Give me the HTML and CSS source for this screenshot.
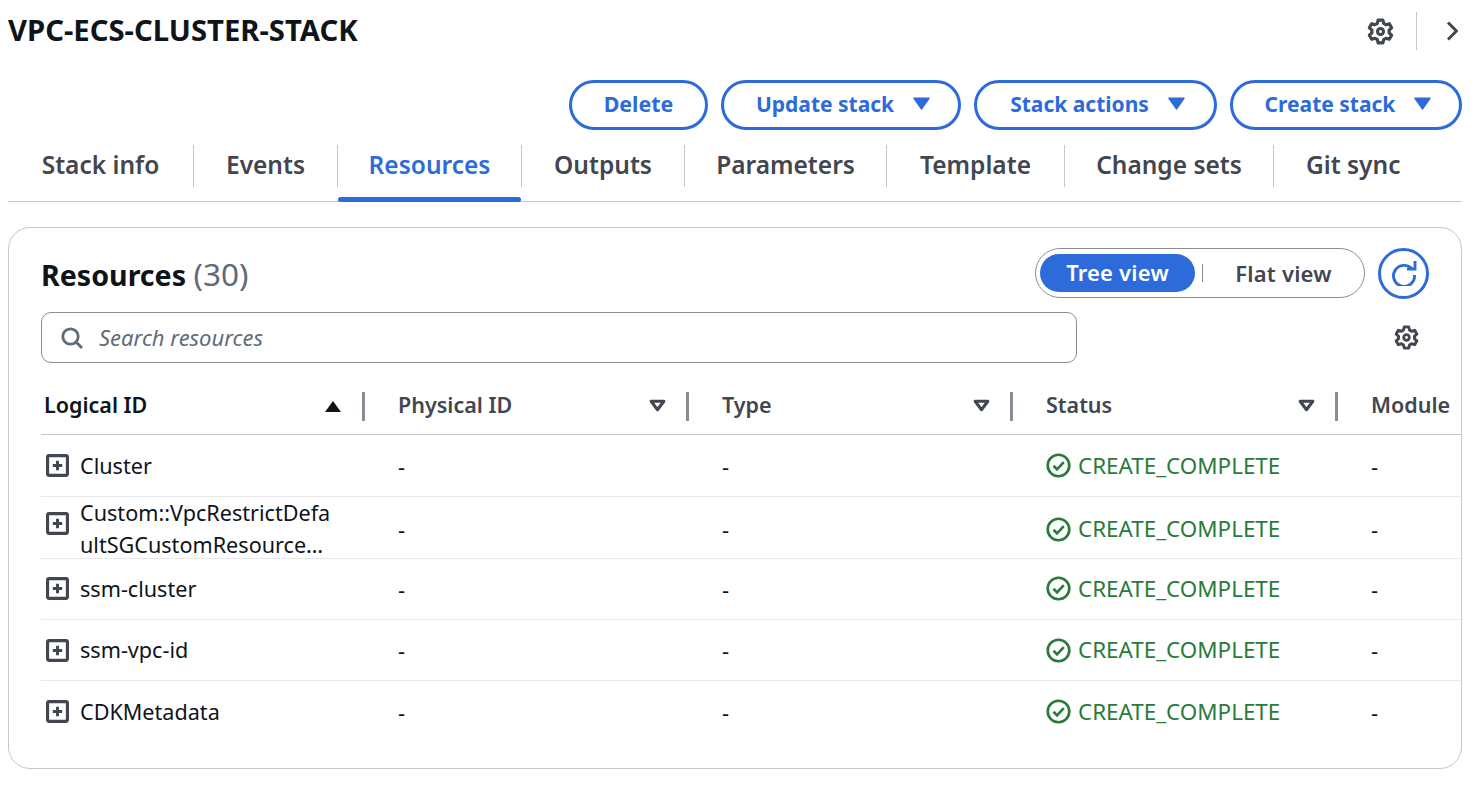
FILE: index.html
```html
<!doctype html>
<html lang="en">
<head>
<title>VPC-ECS-CLUSTER-STACK</title>
<meta charset="UTF-8">
<link rel="stylesheet" href="styles.css">
</head>
<body>
<svg class="defs" width="0" height="0">
    <symbol id="gear" viewBox="0 0 16 16">
        <path d="M6.6 1.2h2.8l.5 2 1.3.8 2-.6 1.4 2.400-1.500 1.400v1.600l1.500 1.400-1.400 2.400-2-.6-1.300.8-.5 2H6.600l-.5-2-1.300-.8-2 .6-1.400-2.400 1.500-1.400V7.200L1.400 5.800l1.400-2.400 2 .6 1.300-.8z" fill="none" stroke="currentColor" stroke-width="1.900" stroke-linejoin="round"/>
        <circle cx="8" cy="8" r="1.800" fill="none" stroke="currentColor" stroke-width="1.800"/>
    </symbol>
    <symbol id="caret" viewBox="0 0 16 12">
        <path d="M1 1h14L8 11z" fill="currentColor" stroke="currentColor" stroke-width="1.500" stroke-linejoin="round"/>
    </symbol>
    <symbol id="sort" viewBox="0 0 16 12">
        <path d="M2 2h12L8 10z" fill="none" stroke="currentColor" stroke-width="2.800" stroke-linejoin="round"/>
    </symbol>
    <symbol id="expand" viewBox="0 0 22 22">
        <rect x="1.500" y="1.500" width="19" height="19" rx="1.500" fill="none" stroke="currentColor" stroke-width="3"/>
        <path d="M11 6.500v9M6.500 11h9" fill="none" stroke="currentColor" stroke-width="2.800"/>
    </symbol>
    <symbol id="ok" viewBox="0 0 26 26">
        <circle cx="13" cy="13" r="11.200" fill="none" stroke="currentColor" stroke-width="2.800"/>
        <path d="M7.800 13.300l3.700 3.700 7-7.500" fill="none" stroke="currentColor" stroke-width="2.800"/>
    </symbol>
</svg>

<div class="top">
    <h1>VPC-ECS-CLUSTER-STACK</h1>
    <div class="top-tools">
        <svg class="gear"><use href="#gear"/></svg>
        <span class="top-sep"></span>
        <svg class="chevron" viewBox="0 0 12 20"><path d="M2 1.500l8.500 8.500-8.500 8.500" fill="none" stroke="currentColor" stroke-width="3"/></svg>
    </div>
</div>

<div class="actions">
    <button class="btn btn-delete">Delete</button>
    <button class="btn btn-update">Update stack<svg class="caret"><use href="#caret"/></svg></button>
    <button class="btn btn-actions">Stack actions<svg class="caret"><use href="#caret"/></svg></button>
    <button class="btn btn-create">Create stack<svg class="caret"><use href="#caret"/></svg></button>
</div>

<ul class="tabs">
    <li>Stack info</li>
    <li>Events</li>
    <li class="active">Resources</li>
    <li>Outputs</li>
    <li>Parameters</li>
    <li>Template</li>
    <li>Change sets</li>
    <li>Git sync</li>
</ul>

<div class="card">
    <div class="card-head">
        <h2>Resources <span>(30)</span></h2>
        <div class="view-tools">
            <div class="toggle">
                <span class="toggle-on">Tree view</span>
                <span class="toggle-sep"></span>
                <span class="toggle-off">Flat view</span>
            </div>
            <button class="refresh">
                <svg viewBox="0 0 26 26"><path d="M21 9A10.500 10.500 0 1 0 23.500 15" fill="none" stroke="currentColor" stroke-width="2.900"/><path d="M24 1v8h-8" fill="none" stroke="currentColor" stroke-width="2.900"/></svg>
            </button>
        </div>
    </div>

    <div class="search-row">
        <div class="search">
            <svg class="search-icon" viewBox="0 0 22 22"><circle cx="9.500" cy="9.500" r="7.700" fill="none" stroke="currentColor" stroke-width="2.800"/><path d="M15 15l6 6" fill="none" stroke="currentColor" stroke-width="2.800"/></svg>
            <span>Search resources</span>
        </div>
        <svg class="gear"><use href="#gear"/></svg>
    </div>

    <div class="table">
        <div class="row head">
            <div class="th sorted">Logical ID<svg class="sort-up" viewBox="0 0 16 12"><path d="M0 12h16L8 1z" fill="currentColor"/></svg></div>
            <div class="th">Physical ID<svg class="sort"><use href="#sort"/></svg></div>
            <div class="th">Type<svg class="sort"><use href="#sort"/></svg></div>
            <div class="th">Status<svg class="sort"><use href="#sort"/></svg></div>
            <div class="th last">Module</div>
        </div>
        <div class="row first-row">
            <div class="td name"><svg class="expand"><use href="#expand"/></svg><span>Cluster</span></div>
            <div class="td">-</div>
            <div class="td">-</div>
            <div class="td status"><svg class="ok"><use href="#ok"/></svg>CREATE_COMPLETE</div>
            <div class="td">-</div>
        </div>
        <div class="row long-row">
            <div class="td name"><svg class="expand"><use href="#expand"/></svg><span class="long">Custom::VpcRestrictDefaultSGCustomResource…</span></div>
            <div class="td">-</div>
            <div class="td">-</div>
            <div class="td status"><svg class="ok"><use href="#ok"/></svg>CREATE_COMPLETE</div>
            <div class="td">-</div>
        </div>
        <div class="row">
            <div class="td name"><svg class="expand"><use href="#expand"/></svg><span>ssm-cluster</span></div>
            <div class="td">-</div>
            <div class="td">-</div>
            <div class="td status"><svg class="ok"><use href="#ok"/></svg>CREATE_COMPLETE</div>
            <div class="td">-</div>
        </div>
        <div class="row">
            <div class="td name"><svg class="expand"><use href="#expand"/></svg><span>ssm-vpc-id</span></div>
            <div class="td">-</div>
            <div class="td">-</div>
            <div class="td status"><svg class="ok"><use href="#ok"/></svg>CREATE_COMPLETE</div>
            <div class="td">-</div>
        </div>
        <div class="row last-row">
            <div class="td name"><svg class="expand"><use href="#expand"/></svg><span>CDKMetadata</span></div>
            <div class="td">-</div>
            <div class="td">-</div>
            <div class="td status"><svg class="ok"><use href="#ok"/></svg>CREATE_COMPLETE</div>
            <div class="td">-</div>
        </div>
    </div>
</div>
</body>
</html>
```

FILE: styles.css
```css
html,body{overflow:hidden;}
body,h1,h2,ul,li{margin:0;padding:0;}
body{background:#fff;color:#0f141a;font-family:"Noto Sans","Open Sans",sans-serif;font-size:22px;height:802px;}
button{font-family:inherit;background:none;cursor:pointer;padding:0;}
svg{display:block;flex:none;}
.defs{position:absolute;}

.top{display:flex;justify-content:space-between;align-items:center;height:62px;padding-left:8px;}
.top h1{font-size:29.250px;font-weight:700;line-height:36px;padding-bottom:2px;}
.top-tools{display:flex;align-items:center;color:#424650;}
.gear{width:27px;height:27px;color:#424650;}
.top-sep{width:1px;height:38px;background:#c6c6cd;margin:0 29px 0 22px;}
.chevron{width:12px;height:20px;margin-right:22px;}

.actions{display:flex;justify-content:flex-end;gap:13px;margin-top:17.500px;padding-right:18px;}
.btn{height:50px;box-sizing:border-box;padding:0 0 2px 4px;border:3px solid #2d6bdb;border-radius:25px;color:#2d6bdb;font-size:21px;font-weight:700;display:flex;align-items:center;justify-content:center;gap:19px;}
.btn-delete{width:139px;padding:0 0 3px;font-size:21.400px;}
.btn-update{width:240px;}
.btn-actions{width:243px;}
.btn-create{width:232px;}
.caret{width:17px;height:13px;}

.tabs{list-style-type:none;display:grid;grid-template-columns:186px 144px 184px 163px 202px 178px 209px 1fr;margin:15px 18px 0 8px;height:57.500px;box-sizing:border-box;border-bottom:1px solid #c6c6cd;}
.tabs li{position:relative;height:42px;line-height:40px;text-align:center;font-size:24.500px;font-weight:600;color:#424650;border-right:1px solid #c6c6cd;white-space:nowrap;}
.tabs li:last-child{border-right:none;text-align:left;padding-left:32px;}
.tabs li.active{color:#2d6bdb;}
.tabs li.active:after{content:"";position:absolute;left:0;right:0;bottom:-15px;height:5px;border-radius:3px;background:#2d6bdb;}

.card{margin:25px 18px 0 8px;height:542px;box-sizing:border-box;border:1px solid #c6c6cd;border-radius:22px;overflow:hidden;padding:19px 0 0 32px;}
.card-head{display:flex;justify-content:space-between;align-items:center;padding-right:32px;height:52px;}
.card-head h2{font-size:28.600px;font-weight:700;}
.card-head h2 span{font-weight:400;font-size:31.500px;color:#5f6b7a;}
.view-tools{display:flex;align-items:center;gap:13px;}
.toggle{width:330px;height:50px;box-sizing:border-box;border:1px solid #8c8c94;border-radius:25px;display:flex;align-items:center;padding-left:4px;font-weight:600;font-size:22px;letter-spacing:.2px;}
.toggle-on{width:155px;height:38px;line-height:37px;text-align:center;background:#2d6bdb;color:#fff;border-radius:19px;}
.toggle-sep{width:1px;height:18px;margin-left:7px;background:#8c8c94;}
.toggle-off{flex:1;text-align:center;color:#424650;}
.refresh{width:51px;height:51px;box-sizing:border-box;border:3px solid #2d6bdb;border-radius:50%;color:#2d6bdb;display:flex;align-items:center;justify-content:center;}
.refresh svg{width:26px;height:26px;}

.search-row{display:flex;align-items:center;margin-top:13px;}
.search{width:1036px;height:51px;box-sizing:border-box;border:1px solid #8c8c94;border-radius:10px;display:flex;align-items:center;padding:0 0 2px 19px;gap:16px;font-style:italic;color:#5f6b7a;}
.search-icon{width:22px;height:22px;margin-top:2px;color:#5f6b7a;}
.search-row .gear{margin-left:317px;width:25px;height:25px;}

.row{display:grid;grid-template-columns:324px 324px 324px 325px 1fr;height:61.300px;border-bottom:1px solid #e8e8ec;box-sizing:border-box;align-items:center;}
.row.first-row{height:62.300px;}
.row.last-row{border-bottom:none;}
.row.head{height:72px;padding-top:14px;border-bottom:1px solid #c6c6cd;}
.th{display:flex;align-items:center;justify-content:space-between;box-sizing:border-box;height:30px;padding:0 23px 3px 33px;font-size:21.500px;font-weight:600;color:#424650;position:relative;white-space:nowrap;}
.th:after{content:"";position:absolute;right:0;top:1px;width:3px;height:29px;background:#8c8c94;}
.th.last:after{display:none;}
.th.sorted{color:#0f141a;padding-left:3px;padding-right:24px;}
.sort-up{width:16px;height:12px;margin-top:3px;}
.sort{width:17px;height:13px;margin-top:3px;color:#424650;}
.td{padding-left:33px;line-height:32px;}
.td.name{padding-left:5px;display:flex;align-items:center;gap:11px;font-size:21.600px;}
.expand{width:23px;height:23px;color:#424650;}
.long-row .expand{margin-top:-12px;}
.long{width:255px;word-break:break-all;}
.td.status{display:flex;align-items:center;gap:7px;font-size:22.400px;color:#2a7a3b;}
.ok{width:25px;height:25px;}
```
